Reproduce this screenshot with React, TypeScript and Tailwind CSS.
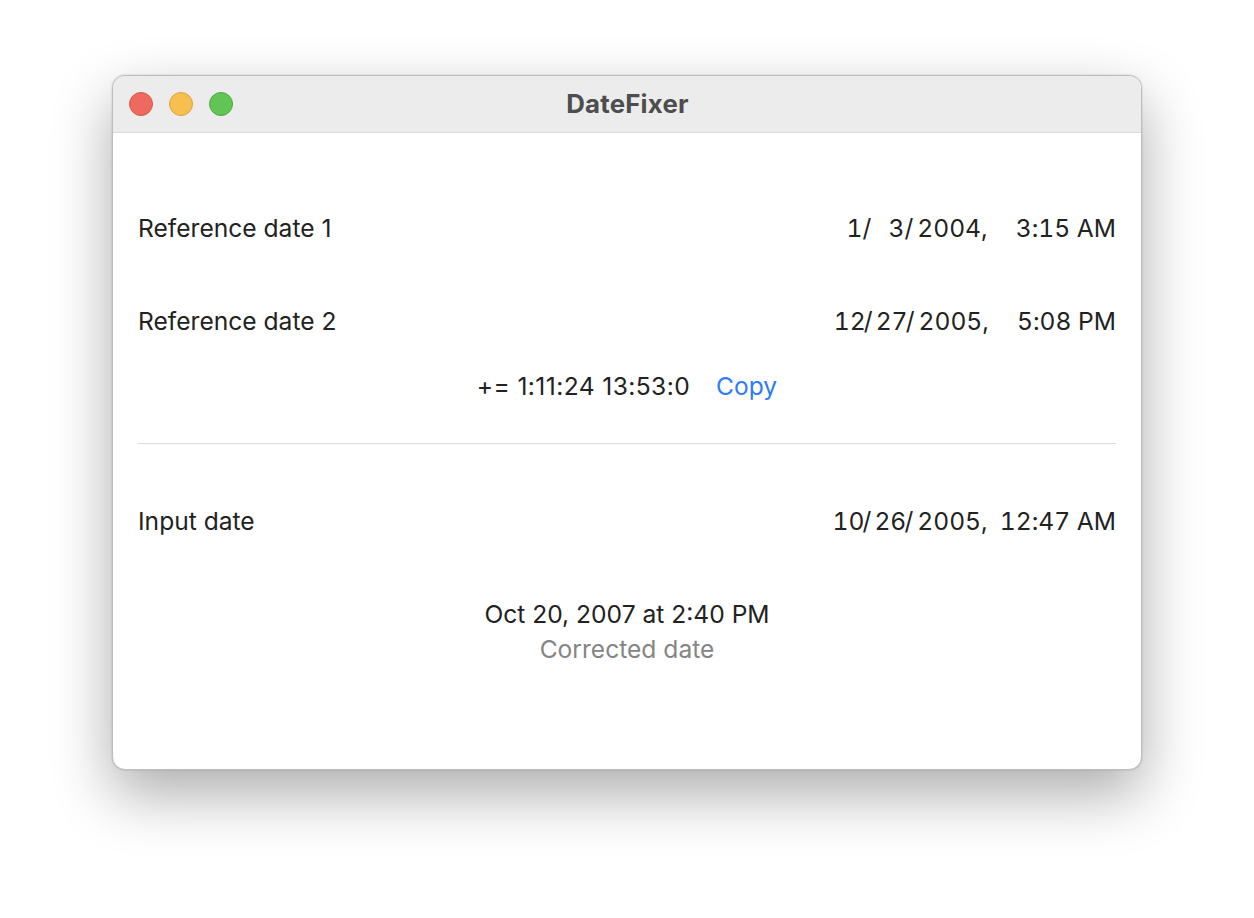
import React from "react";

const font = { fontFamily: "Inter, 'Noto Sans', sans-serif" };

function DateValue({ m, d, y, h, min, ap }: { m: string; d: string; y: string; h: string; min: string; ap: string }) {
  return (
    <div className="flex items-baseline whitespace-pre tabular-nums">
      <span className="inline-block w-[30px] text-right">{m}</span>
      <span className="mr-[3px]">/</span>
      <span className="inline-block w-[30px] text-right">{d}</span>
      <span className="mr-[4px]">/</span>
      <span>{y}</span>
      <span>,</span>
      <span className="inline-block w-[44px] text-right">{h}</span>
      <span>:</span>
      <span>{min}</span>
      <span> {ap}</span>
    </div>
  );
}

export default function App() {
  return (
    <div className="min-h-[918px] w-full bg-white" style={font}>
      <div className="pl-[112px] pt-[75px]">
        <div className="w-[1030px] h-[695px] rounded-[13px] bg-white border border-[#bdbdbd] shadow-[0_24px_60px_rgba(0,0,0,0.33),0_0_2px_rgba(0,0,0,0.2)] overflow-hidden flex flex-col">
          <div className="relative h-[57px] bg-[#ececec] border-b border-[#d9d9d9] flex items-center justify-center shrink-0">
            <div className="absolute left-[16px] top-[16px] flex gap-[16px]">
              <div className="w-[24px] h-[24px] rounded-full bg-[#ee6a5f] border border-[#d8574c]" />
              <div className="w-[24px] h-[24px] rounded-full bg-[#f6bf50] border border-[#d9a33d]" />
              <div className="w-[24px] h-[24px] rounded-full bg-[#61c555] border border-[#4ea844]" />
            </div>
            <div className="text-[25.8px] font-bold text-[#4d4d4d] tracking-[0.2px] pl-[1px]">DateFixer</div>
          </div>
          <div className="flex-1 px-[25px] text-[24.6px] text-[#222222] leading-[29px]">
            <div className="mt-[81px] flex justify-between items-center">
              <div>Reference date 1</div>
              <DateValue m="1" d="3" y="2004" h="3" min="15" ap="AM" />
            </div>
            <div className="mt-[64px] flex justify-between items-center">
              <div>Reference date 2</div>
              <DateValue m="12" d="27" y="2005" h="5" min="08" ap="PM" />
            </div>
            <div className="mt-[36px] flex justify-center items-center gap-[26px]">
              <div className="tracking-[0.4px]">+= 1:11:24 13:53:0</div>
              <div className="text-[#2f7bf5]">Copy</div>
            </div>
            <div className="mt-[42px] h-px bg-[#dcdcdc]" />
            <div className="mt-[63px] flex justify-between items-center">
              <div>Input date</div>
              <DateValue m="10" d="26" y="2005" h="12" min="47" ap="AM" />
            </div>
            <div className="mt-[64px] flex flex-col items-center">
              <div>Oct 20, 2007 at 2:40 PM</div>
              <div className="text-[#858585] mt-[6px]">Corrected date</div>
            </div>
          </div>
        </div>
      </div>
    </div>
  );
}
